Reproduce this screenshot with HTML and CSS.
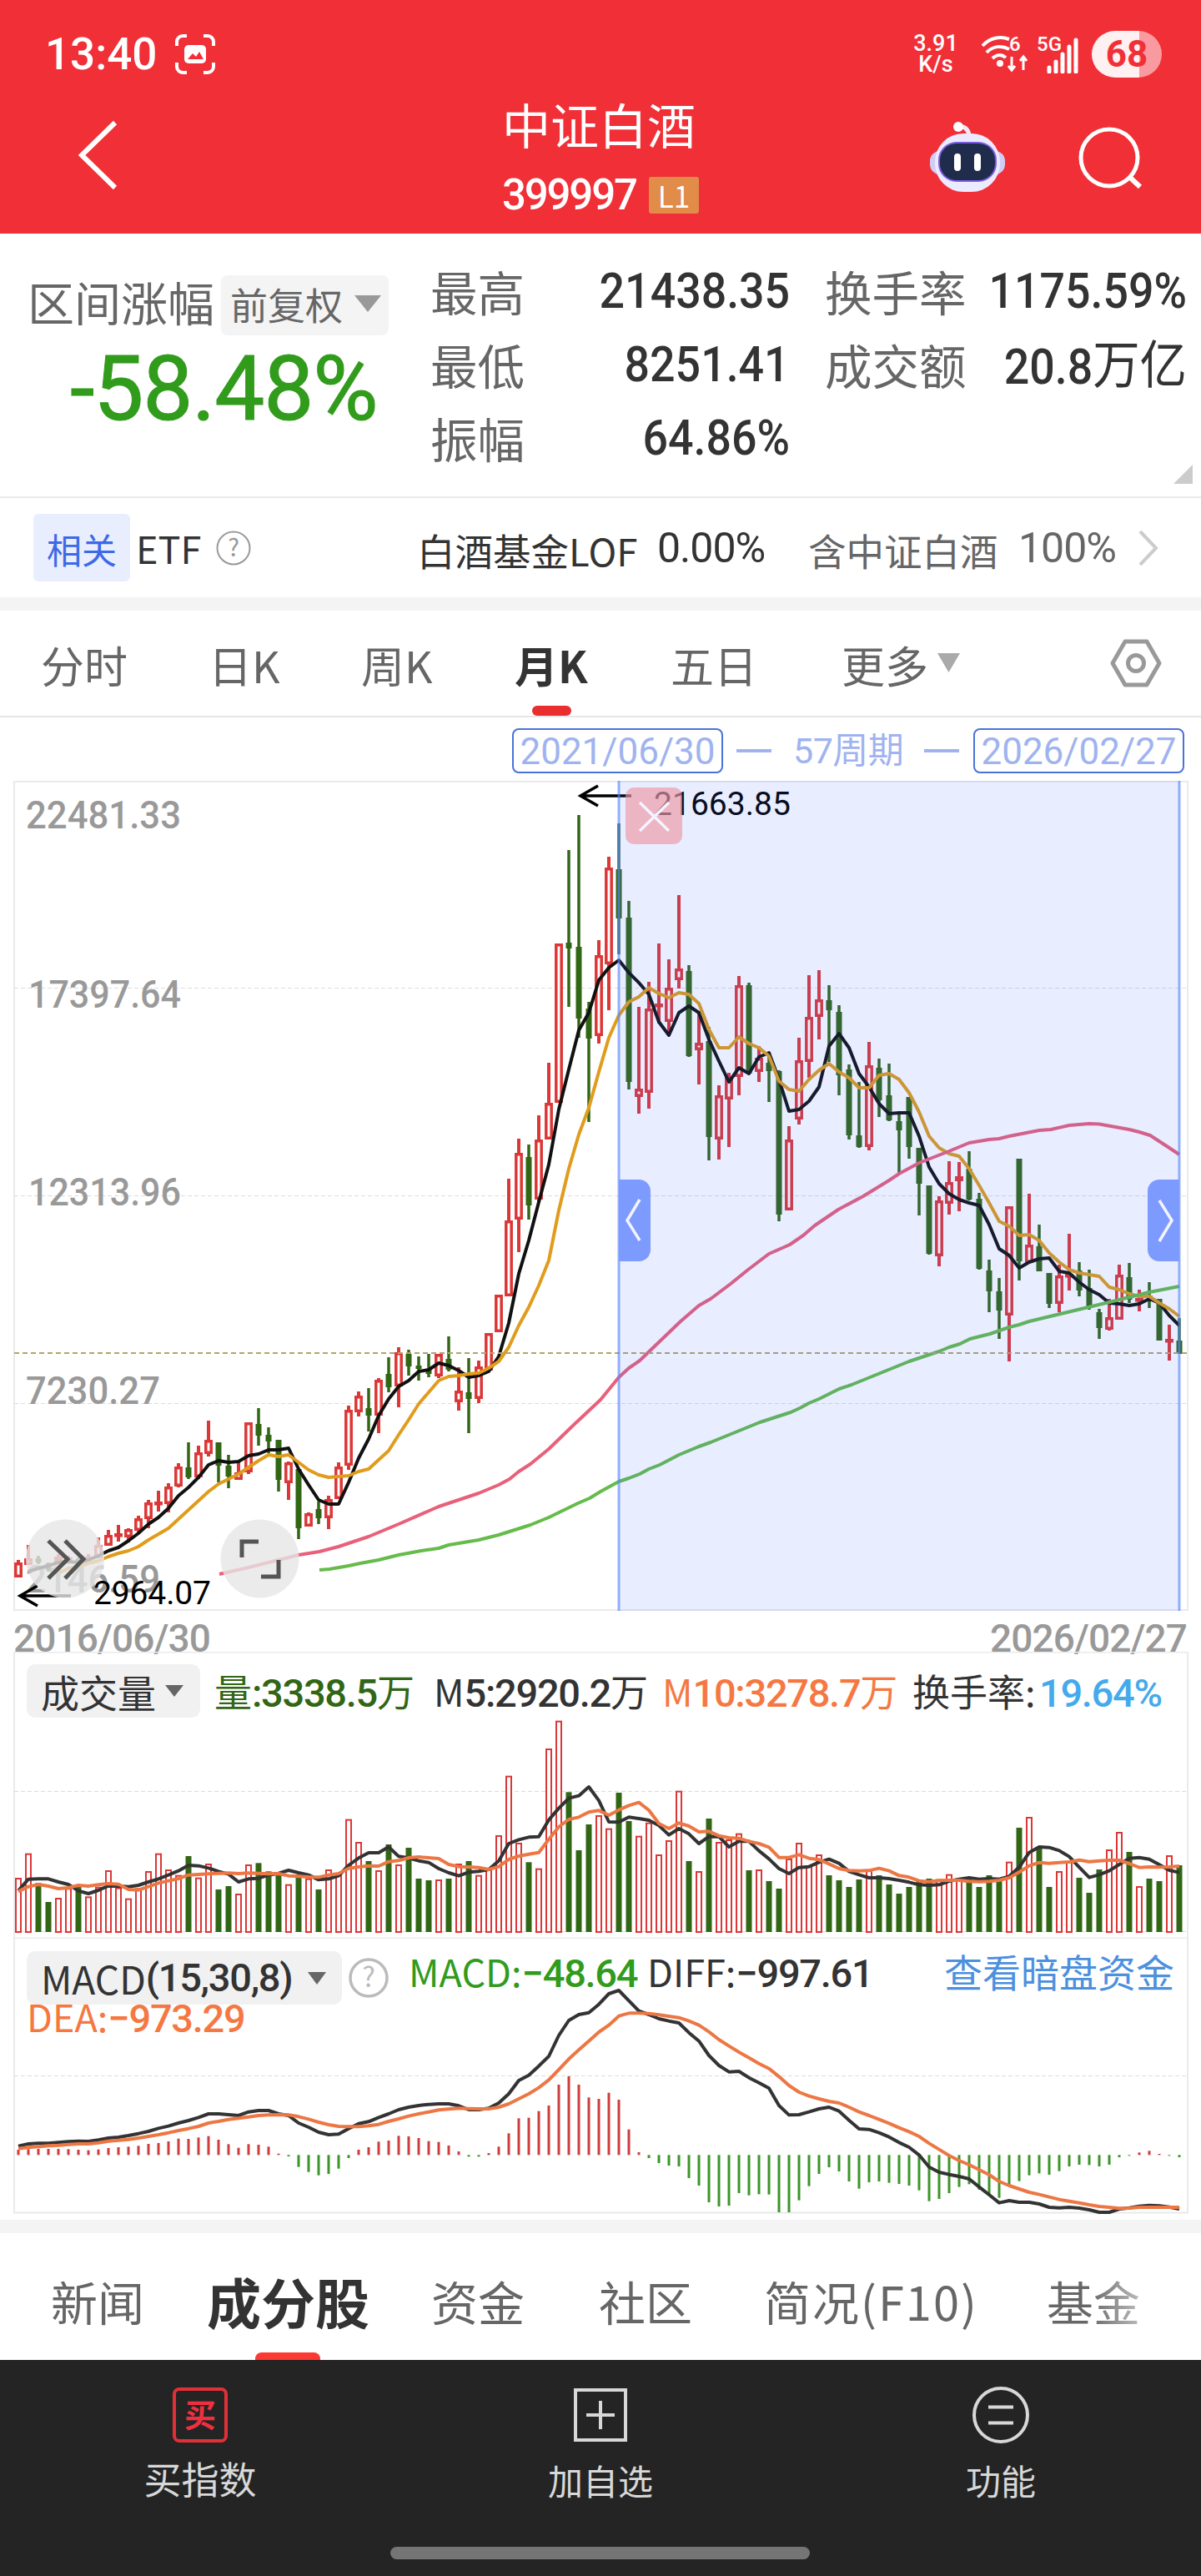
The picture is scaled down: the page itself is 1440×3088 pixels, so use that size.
FILE: index.html
```html
<!DOCTYPE html>
<html lang="zh-CN">
<head>
  <meta charset="UTF-8">
  <title>中证白酒 399997</title>
  <link rel="stylesheet" href="styles.css">
</head>
<body>

  <header class="app-header">
    <div class="status-bar">
      <span class="clock">13:40</span>
      <svg class="shot-icon" width="48" height="48" viewBox="0 0 48 48">
        <path d="M2 14V9a7 7 0 0 1 7-7h5M34 2h5a7 7 0 0 1 7 7v5M46 34v5a7 7 0 0 1-7 7h-5M14 46H9a7 7 0 0 1-7-7v-5" fill="none" stroke="#fff" stroke-width="4"/>
        <rect x="11" y="13" width="26" height="22" rx="5" fill="#fff"/>
        <path d="M15 30l6-7 4 4 4-6 5 9z" fill="#f12f37"/>
      </svg>
      <div class="net-speed"><span>3.91</span><span>K/s</span></div>
      <svg class="wifi-icon" width="58" height="46" viewBox="0 0 58 46">
        <g fill="none" stroke="#fff" stroke-width="4">
          <path d="M1 13C10 3 22 1 33 5"/>
          <path d="M6 21c7-8 18-9 27-4"/>
          <path d="M13 28c5-5 11-5 16-1"/>
        </g>
        <circle cx="22" cy="34" r="4" fill="#fff"/>
        <path d="M36 26v16M32 37l4 5 4-5M50 42V26M46 31l4-5 4 5" fill="none" stroke="#fff" stroke-width="3"/>
        <text x="33" y="19" class="wifi-text">6</text>
      </svg>
      <svg class="signal-icon" width="54" height="46" viewBox="0 0 54 46">
        <text x="0" y="19" class="wifi-text">5G</text>
        <path d="M15 39v5M23 32v12M31 23v21M39 14v30M47 6v38" stroke="#fff" stroke-width="5" stroke-linecap="round"/>
      </svg>
      <span class="battery">68</span>
    </div>
    <div class="title-bar">
      <svg class="back-icon" width="52" height="86" viewBox="0 0 52 86"><path d="M46 4L6 43l40 39" fill="none" stroke="#fff" stroke-width="6"/></svg>
      <div class="title">
        <h1>中证白酒</h1>
        <div class="code-line"><span class="code">399997</span><span class="level">L1</span></div>
      </div>
      <svg class="robot-icon" width="96" height="90" viewBox="0 0 96 90">
        <path d="M36 8q13 0 14 12" fill="none" stroke="#efeafc" stroke-width="5"/>
        <circle cx="37" cy="9" r="6" fill="#fff"/>
        <rect x="3" y="38" width="90" height="28" rx="12" fill="#cfcdf6"/>
        <rect x="9" y="17" width="78" height="70" rx="34" fill="#eceaff"/>
        <rect x="13" y="27" width="70" height="48" rx="22" fill="#7a5be0"/>
        <rect x="15" y="29" width="66" height="44" rx="20" fill="#202c4c"/>
        <path d="M36 45v13M60 45v13" stroke="#fff" stroke-width="8" stroke-linecap="round"/>
      </svg>
      <svg class="search-icon" width="80" height="80" viewBox="0 0 80 80"><circle cx="38" cy="38" r="34" fill="none" stroke="#fff" stroke-width="5"/><path d="M61 60l14 13" stroke="#fff" stroke-width="6"/></svg>
    </div>
  </header>

  <section class="stats">
    <div class="range">
      <div class="range-head">
        <span class="range-label">区间涨幅</span>
        <button class="adjust">前复权<svg width="32" height="20" viewBox="0 0 32 20"><path d="M0 0h32L16 20z" fill="#999"/></svg></button>
      </div>
      <div class="range-value">-58.48%</div>
    </div>
    <dl class="figures">
      <dt>最高</dt><dd>21438.35</dd><dt class="second">换手率</dt><dd>1175.59%</dd>
      <dt>最低</dt><dd>8251.41</dd><dt class="second">成交额</dt><dd>20.8<em>万亿</em></dd>
      <dt>振幅</dt><dd>64.86%</dd>
    </dl>
    <span class="corner"></span>
  </section>

  <section class="etf">
    <span class="etf-tag">相关</span>
    <span class="etf-title">ETF</span>
    <svg class="etf-help" width="42" height="42" viewBox="0 0 42 42"><circle cx="21" cy="21" r="19.5" fill="none" stroke="#999" stroke-width="2"/><text x="21" y="31" class="help-text">?</text></svg>
    <span class="etf-name">白酒基金LOF</span>
    <span class="etf-change">0.00%</span>
    <span class="etf-hold">含中证白酒</span>
    <span class="etf-share">100%</span>
    <svg class="etf-more" width="24" height="42" viewBox="0 0 24 42"><path d="M2 1l19 20L2 41" fill="none" stroke="#ccc" stroke-width="4"/></svg>
  </section>

  <nav class="periods">
    <a>分时</a><a>日K</a><a>周K</a><a class="active">月K</a><a>五日</a>
    <a class="more">更多<svg width="27" height="23" viewBox="0 0 27 23"><path d="M0 0h27L13.500 23z" fill="#aaa"/></svg></a>
    <svg class="settings" width="62" height="58" viewBox="0 0 62 58"><path d="M18 3h26l15 26-15 26H18L3 29z" fill="none" stroke="#999" stroke-width="5" stroke-linejoin="round"/><circle cx="31" cy="29" r="9.500" fill="none" stroke="#999" stroke-width="5"/></svg>
  </nav>

  <div class="interval">
    <span class="date">2021/06/30</span><i></i><span class="count">57周期</span><i></i><span class="date">2026/02/27</span>
  </div>

  <svg id="kline" class="chart" width="1440" height="996" viewBox="0 936 1440 996">
    <g class="axis">
      <rect class="frame" x="17" y="937" width="1407" height="993"/>
      <path class="grid" d="M17 1184.500H1424M17 1433.500H1424M17 1682.500H1424"/>
      <text x="31" y="993" textLength="186" lengthAdjust="spacingAndGlyphs">22481.33</text>
      <text x="34" y="1208" textLength="183" lengthAdjust="spacingAndGlyphs">17397.64</text>
      <text x="34" y="1445" textLength="183" lengthAdjust="spacingAndGlyphs">12313.96</text>
      <text x="31" y="1683" textLength="161" lengthAdjust="spacingAndGlyphs">7230.27</text>
      <text x="31" y="1909" textLength="161" lengthAdjust="spacingAndGlyphs">2146.59</text>
    </g>
    <g id="candles"></g>
    <path class="price" d="M17 1622H1424"/>
    <g class="mark">
      <path d="M757 954H696M717 942l-21 12 21 12"/>
      <text x="784" y="977" textLength="164">21663.85</text>
      <path d="M85 1913H24M45 1901l-21 12 21 12"/>
    </g>
    <g class="selection">
      <rect x="742" y="936" width="672" height="995"/>
      <path class="edge" d="M742 936V1931M1414 936V1931"/>
      <path class="handle" d="M742 1414h24a14 14 0 0 1 14 14v70a14 14 0 0 1-14 14h-24zM1414 1414h-24a14 14 0 0 0-14 14v70a14 14 0 0 0 14 14h24z"/>
      <path class="arrow" d="M767 1438l-15 25 15 24M1390 1439l15 24-15 25"/>
      <rect class="close" x="750" y="944" width="68" height="68" rx="10"/>
      <path class="arrow" d="M767 962l35 34M802 962l-35 34"/>
    </g>
    <g class="float">
      <circle cx="78" cy="1868.500" r="47"/>
      <path d="M58 1847l23 22-23 23M78 1847l22 22-22 23"/>
      <circle cx="311.500" cy="1868.500" r="47"/>
      <path d="M290 1867v-19h20M313 1890h21v-20"/>
    </g>
    <text class="mark-text" x="112" y="1923" textLength="141">2964.07</text>
  </svg>
  <div class="dates"><span>2016/06/30</span><span>2026/02/27</span></div>

  <section class="panel volume">
    <svg id="volume" class="canvas" width="1440" height="344" viewBox="0 1980 1440 344">
      <rect class="frame" x="17" y="1980.500" width="1407" height="343"/>
      <path class="grid" d="M17 2147.500H1424M17 2315.500H1424"/>
    </svg>
    <div class="legend">
      <button>成交量<svg width="22" height="14" viewBox="0 0 22 14"><path d="M0 0h22L11 14z" fill="#666"/></svg></button>
      <span class="vol">量<b>:3338.5</b>万</span>
      <span class="m5">M<b>5:2920.2</b>万</span>
      <span class="m10">M<b>10:3278.7</b>万</span>
      <span class="turn">换手率:</span>
      <span class="rate"><b>19.64%</b></span>
    </div>
  </section>

  <section class="panel macd">
    <svg id="macd" class="canvas" width="1440" height="337" viewBox="0 2324 1440 337">
      <path class="frame" d="M17 2324V2652.500H1424V2324"/>
      <path class="grid" d="M17 2488.500H1424"/>
    </svg>
    <div class="legend">
      <button>MACD<b>(15,30,8)</b><svg width="22" height="15" viewBox="0 0 22 15"><path d="M0 0h22L11 15z" fill="#666"/></svg></button>
      <svg class="help" width="48" height="48" viewBox="0 0 48 48"><circle cx="24" cy="24" r="22" fill="none" stroke="#bbb" stroke-width="3.500"/><text x="24" y="35" class="help-text big">?</text></svg>
      <span class="macd-value">MACD:<b>−48.64</b></span>
      <span class="diff">DIFF:<b>−997.61</b></span>
      <a class="link">查看暗盘资金</a>
    </div>
    <div class="dea">DEA:<b>−973.29</b></div>
  </section>

  <nav class="sections">
    <a>新闻</a><a class="active">成分股</a><a>资金</a><a>社区</a><a class="f10">简况(F10)</a><a class="fade">基金</a>
  </nav>

  <footer class="bottom">
    <div class="actions">
      <a>
        <svg width="70" height="70" viewBox="0 0 70 70"><rect x="4" y="4" width="62" height="62" rx="6" fill="none" stroke="#e03038" stroke-width="4"/><text x="35" y="49" class="buy-text">买</text></svg>
        <span class="wide">买指数</span>
      </a>
      <a>
        <svg width="70" height="70" viewBox="0 0 70 70"><path d="M5 5h60v60H5zM35 18v34M18 35h34" fill="none" stroke="#d8d8d8" stroke-width="4"/></svg>
        <span>加自选</span>
      </a>
      <a>
        <svg width="70" height="70" viewBox="0 0 70 70"><circle cx="35" cy="35" r="32" fill="none" stroke="#d8d8d8" stroke-width="4"/><path d="M20 25.500h30M20 44.500h30" stroke="#d8d8d8" stroke-width="4"/></svg>
        <span>功能</span>
      </a>
    </div>
    <div class="home-bar"></div>
  </footer>

  <script src="chart.js"></script>
</body>
</html>
```
FILE: styles.css
```css
:root {
  --red: #f12f37;
  --text: #333;
  --muted: #666;
  --grey: #999;
  --line: #eaeaea;
  --band: #f4f4f4;
  --num: Roboto, "Noto Sans CJK SC", sans-serif;
  --cjk: "Noto Sans CJK SC", sans-serif;
}
* {
  box-sizing: border-box;
}
body {
  margin: 0;
  width: 1440px;
  background: #fff;
  color: var(--text);
  font-family: var(--cjk);
  line-height: 1;
}
h1, dl, dd {
  margin: 0;
}
button {
  border: none;
  padding: 0;
  font-family: inherit;
  line-height: 1;
  white-space: nowrap;
}
svg {
  display: block;
  flex: none;
}
/* Header */
.app-header {
  height: 280px;
  background: var(--red);
  color: #fff;
}
.status-bar {
  display: flex;
  align-items: center;
  height: 130px;
  padding: 0 47px 0 54px;
  font-family: var(--num);
}
.clock {
  width: 156px;
  font-size: 53px;
  font-weight: 500;
}
.net-speed {
  display: flex;
  flex-direction: column;
  align-items: center;
  width: 66px;
  margin-left: 831px;
  font-size: 27px;
  line-height: 25px;
  font-weight: 500;
}
.wifi-icon {
  margin-left: 22px;
}
.wifi-text {
  font: 500 24px Roboto, sans-serif;
  fill: #fff;
}
.signal-icon {
  margin-left: 8px;
}
.battery {
  width: 84px;
  height: 56px;
  margin-left: auto;
  border-radius: 28px;
  background: linear-gradient(90deg, #fff0f1 68%, #f89a9f 68%);
  color: var(--red);
  font-size: 44px;
  line-height: 57px;
  font-weight: 700;
  text-align: center;
}
.title-bar {
  display: grid;
  grid-template-columns: 510px 520px 96px 80px;
  height: 150px;
  padding-left: 92px;
}
.back-icon {
  margin-top: 13px;
}
.title {
  display: flex;
  flex-direction: column;
}
.title h1 {
  height: 60px;
  font-size: 58px;
  font-weight: 400;
  line-height: 36px;
}
.code-line {
  display: flex;
  align-items: center;
  height: 92px;
  padding-bottom: 5px;
}
.code {
  width: 176px;
  font: 500 51px/52px var(--num);
  letter-spacing: -2.200px;
}
.level {
  width: 60px;
  height: 44px;
  border-radius: 3px;
  background: #e18c49;
  font: 400 35px/43px var(--cjk);
  text-align: center;
}
.robot-icon {
  margin: 13px 0 0 -10px;
}
.search-icon {
  margin: 21px 0 0 74px;
}
/* Range statistics */
.stats {
  position: relative;
  display: flex;
  height: 317px;
  border-bottom: 2px solid var(--line);
}
.range {
  width: 516px;
  padding: 50px 0 0 33px;
}
.range-head {
  display: flex;
  align-items: center;
  gap: 8px;
  height: 72px;
}
.range-label {
  font-size: 56px;
  line-height: 60px;
  margin-top: -10px;
  color: var(--muted);
}
.adjust {
  display: flex;
  align-items: center;
  gap: 14px;
  width: 201px;
  height: 72px;
  padding: 0 0 4px 11px;
  border-radius: 8px;
  background: var(--band);
  color: var(--muted);
  font-size: 45px;
}
.range-value {
  padding-left: 51px;
  margin-top: 11px;
  color: #319b1c;
  font: 400 107px/107px var(--num);
  letter-spacing: -1.200px;
  -webkit-text-stroke: 1px #319b1c;
}
.figures {
  display: grid;
  grid-template-columns: 180px 251px 212px 264px;
  grid-auto-rows: 88px;
  align-items: center;
  height: 264px;
  margin-top: 24px;
}
.figures dt {
  color: var(--muted);
  font-size: 56.500px;
}
.figures dt.second {
  padding-left: 42px;
}
.figures dd {
  justify-self: end;
  font: 500 59px/59px var(--num);
  white-space: nowrap;
  transform: scaleX(.91);
  transform-origin: right;
}
.figures em {
  font: 400 62px/59px var(--cjk);
}
.corner {
  position: absolute;
  right: 10px;
  bottom: 15px;
  border-left: 23px solid transparent;
  border-bottom: 23px solid #ccc;
}
/* Related ETF */
.etf {
  display: flex;
  align-items: center;
  height: 135px;
  padding-left: 40px;
  border-bottom: 16px solid var(--band);
  font-size: 45px;
  line-height: 60px;
  white-space: nowrap;
}
.etf-tag {
  width: 116px;
  height: 81px;
  border-radius: 6px;
  background: #e8eefe;
  color: #3c69e7;
  font-size: 42px;
  line-height: 84px;
  text-align: center;
}
.etf-title {
  width: 96px;
  margin-left: 7px;
}
.etf-name {
  width: 288px;
  margin-left: 199px;
  padding-top: 5px;
  font-size: 45.500px;
}
.etf-change {
  width: 181px;
  font: 400 50px/60px var(--num);
  letter-spacing: -1px;
}
.etf-hold {
  width: 252px;
  padding-top: 5px;
  color: var(--muted);
  font-size: 45.500px;
}
.etf-share {
  width: 144px;
  color: var(--muted);
  font: 400 50px/60px var(--num);
  letter-spacing: -1px;
}
.help-text {
  font: 400 29px "Noto Sans CJK SC", sans-serif;
  fill: #999;
  text-anchor: middle;
}
.help-text.big {
  font-size: 33px;
  fill: #bbb;
}
/* Period tabs */
.periods {
  position: relative;
  display: grid;
  grid-template-columns: 201px 183px 184px 187px 205px 322px 62px;
  align-items: center;
  height: 128px;
  padding-left: 49px;
  border-bottom: 2px solid #e6e6e6;
  color: var(--muted);
  font-size: 52px;
}
.periods a {
  position: relative;
  display: flex;
  align-items: center;
  height: 126px;
  padding-top: 4px;
}
.periods .active {
  color: var(--text);
  font-weight: 700;
}
.periods .active::after {
  content: "";
  position: absolute;
  left: 21px;
  bottom: 0;
  width: 47px;
  height: 12px;
  border-radius: 6px;
  background: #e82e2e;
}
.periods .more svg {
  margin: -6px 0 0 11px;
}
/* Selected interval */
.interval {
  display: flex;
  align-items: center;
  justify-content: flex-end;
  height: 76px;
  padding: 4px 20px 0 0;
  color: #9fb3f0;
  font: 400 44px/48px var(--num);
}
.interval .date {
  width: 253px;
  height: 54px;
  border: 2px solid #4a72d8;
  border-radius: 8px;
  line-height: 52px;
  text-align: center;
}
.interval .count {
  width: 132px;
  font-size: 43px;
  letter-spacing: -.5px;
  white-space: nowrap;
}
.interval i {
  width: 42px;
  height: 4px;
  margin: 0 17px 0 16px;
  background: #9fb3f0;
}
.interval i:nth-of-type(1) {
  margin-right: 26px;
}
.interval i:nth-of-type(2) {
  margin-left: 25px;
}
/* Charts */
.frame {
  fill: none;
  stroke: var(--line);
  stroke-width: 2;
}
.grid {
  fill: none;
  stroke: #dcdcdc;
  stroke-width: 1.200;
  stroke-dasharray: 5 3;
}
.axis text {
  font: 500 47px Roboto, sans-serif;
  fill: var(--grey);
}
.price {
  stroke: #b5a36c;
  stroke-width: 2;
  stroke-dasharray: 6 4;
}
.mark path {
  fill: none;
  stroke: #000;
  stroke-width: 3.500;
}
.mark text, .mark-text {
  font: 400 39px Roboto, sans-serif;
  fill: #000;
}
.up {
  fill: #fff;
  stroke: #dc3737;
}
.down {
  fill: #316615;
  stroke: none;
}
.wick-up {
  stroke: #dc3737;
  stroke-width: 4;
}
.wick-down {
  stroke: #316615;
  stroke-width: 3.500;
}
.line {
  fill: none;
  stroke-width: 4;
  stroke-linejoin: round;
}
.ma5 { stroke: #111; }
.ma10 { stroke: #e09c1c; }
.ma60 { stroke: #e8607a; }
.ma120 { stroke: #66bb4a; }
.dark { stroke: #333; }
.orange { stroke: #ec7744; }
.selection rect {
  fill: rgba(64, 110, 255, .12);
}
.selection .edge {
  stroke: rgba(90, 135, 255, .65);
  stroke-width: 3;
}
.selection .handle {
  fill: #7d9bff;
}
.selection .arrow {
  fill: none;
  stroke: #f4f4ff;
  stroke-width: 3.500;
}
.selection .close {
  fill: rgba(236, 150, 165, .65);
}
.float circle {
  fill: rgba(230, 230, 230, .8);
}
.float path {
  fill: none;
  stroke: #555;
  stroke-width: 5;
}
.dates {
  display: flex;
  justify-content: space-between;
  height: 48px;
  padding: 9px 17px 0 16px;
  color: var(--grey);
  font: 500 46px/46px var(--num);
  letter-spacing: -.9px;
}
/* Indicator panels */
.panel {
  position: relative;
}
.canvas {
  position: absolute;
  left: 0;
  top: 0;
}
.volume {
  height: 344px;
  padding-top: 15px;
}
.macd {
  height: 353px;
  padding-top: 15px;
  border-bottom: 16px solid var(--band);
}
.legend {
  position: relative;
  display: flex;
  align-items: center;
  height: 64px;
  padding-left: 32px;
  font: 400 45px/60px var(--cjk);
  white-space: nowrap;
}
.legend b, .dea b {
  font: 500 47px/48px Roboto, sans-serif;
  letter-spacing: -1.300px;
}
.legend button {
  display: flex;
  align-items: center;
  height: 64px;
  padding-left: 17px;
  border-radius: 10px;
  background: #f1f1f1;
  color: var(--text);
  font-size: 46px;
}
.volume button {
  width: 208px;
  gap: 11px;
}
.macd button {
  width: 378px;
}
.macd button svg {
  margin-left: auto;
  margin-right: 19px;
}
.vol {
  width: 263px;
  margin-left: 17px;
  color: #316615;
}
.m5 {
  width: 274px;
}
.m10 {
  width: 300px;
  color: #f57843;
}
.turn {
  width: 152px;
}
.rate {
  color: #45aaeb;
}
.help {
  margin-left: 8px;
}
.macd-value {
  width: 286px;
  margin: -16px 0 0 24px;
  color: #319b1c;
}
.diff {
  width: 356px;
  margin-top: -16px;
}
.link {
  margin-top: -18px;
  color: #4c90de;
  font-size: 46px;
}
.dea {
  position: relative;
  padding-left: 32px;
  margin-top: -16px;
  color: #f57843;
  font: 400 45px/60px var(--cjk);
}
/* Section tabs */
.sections {
  display: grid;
  grid-template-columns: 187px 269px 201px 198px 339px 130px;
  align-items: center;
  height: 152px;
  padding-left: 61px;
  overflow: hidden;
  color: var(--muted);
  font-size: 56px;
}
.sections a {
  position: relative;
  height: 152px;
  line-height: 162px;
  white-space: nowrap;
}
.sections .active {
  color: var(--text);
  font-size: 65px;
  font-weight: 700;
}
.sections .active::after {
  content: "";
  position: absolute;
  left: 58px;
  bottom: -6px;
  width: 78px;
  height: 15px;
  border-radius: 8px;
  background: #fb3b33;
}
.sections .f10 {
  letter-spacing: 2px;
}
.sections .fade {
  color: transparent;
  background: linear-gradient(90deg, #666 50px, #bbb 112px);
  -webkit-background-clip: text;
  background-clip: text;
}
/* Bottom bar */
.bottom {
  height: 259px;
  padding-top: 31px;
  background: #242424;
}
.actions {
  display: grid;
  grid-template-columns: repeat(3, 1fr);
  height: 193px;
}
.actions a {
  display: flex;
  flex-direction: column;
  align-items: center;
  color: #d8d8d8;
  font-size: 42px;
}
.actions span {
  margin-top: 19px;
  line-height: 48px;
}
.actions .wide {
  margin-top: 17px;
  font-size: 45px;
}
.buy-text {
  font: 700 38px "Noto Sans CJK SC", sans-serif;
  fill: #ee3040;
  text-anchor: middle;
}
.home-bar {
  width: 503px;
  height: 15px;
  margin-left: 468px;
  border-radius: 8px;
  background: #757575;
}
```
FILE: chart.js
```js
// One column every 12px, the first one centred on x = 22
const x = i => 22 + i * 12;

// direction, high, body top, body bottom, low
const candles = [
  ['r',1870,1873,1891,1891],['r',1852,1868,1876,1876],['g',1865,1868,1873,1875],['g',1873,1874,1882,1884],
  ['r',1863,1866,1873,1875],['r',1865,1867,1871,1874],['g',1867,1869,1872,1873],['r',1863,1866,1870,1873],
  ['r',1843,1852,1867,1868],['r',1834,1840,1853,1853],['r',1828,1838,1841,1848],['r',1832,1833,1843,1849],
  ['r',1817,1820,1835,1837],['r',1798,1801,1821,1832],['r',1787,1800,1803,1812],['r',1778,1782,1803,1813],
  ['r',1754,1758,1782,1783],['g',1729,1759,1771,1773],['r',1733,1741,1771,1773],['r',1703,1726,1743,1746],
  ['g',1729,1729,1757,1777],['g',1744,1757,1770,1784],['r',1752,1765,1774,1774],['r',1705,1705,1765,1767],
  ['g',1688,1707,1721,1733],['g',1711,1720,1728,1742],['g',1726,1726,1774,1788],['r',1752,1753,1778,1798],
  ['g',1761,1761,1832,1845],['r',1813,1814,1830,1830],['g',1800,1809,1820,1827],['r',1793,1797,1820,1833],
  ['r',1753,1758,1797,1797],['r',1685,1690,1757,1762],['r',1668,1673,1693,1698],['g',1664,1688,1697,1716],
  ['r',1652,1654,1697,1718],['g',1627,1647,1663,1669],['r',1615,1621,1662,1687],['g',1618,1623,1638,1649],
  ['g',1626,1637,1641,1655],['g',1623,1642,1647,1651],['r',1623,1623,1650,1652],['g',1602,1629,1642,1644],
  ['r',1639,1667,1681,1691],['g',1628,1669,1677,1718],['r',1631,1638,1677,1682],['r',1598,1598,1643,1643],
  ['r',1552,1552,1597,1597],['r',1413,1463,1554,1554],['r',1365,1382,1462,1501],['g',1372,1387,1445,1462],
  ['r',1337,1366,1438,1441],['r',1274,1322,1366,1366],['r',1131,1131,1322,1322],['g',1019,1130,1137,1207],
  ['g',977,1135,1221,1244],['g',1201,1209,1245,1345],['r',1127,1145,1242,1251],['r',1027,1040,1156,1211],
  ['g',987,1042,1101,1144],['g',1080,1100,1297,1306],['r',1207,1305,1315,1335],['r',1177,1209,1310,1329],
  ['r',1131,1203,1207,1227],['r',1150,1184,1225,1240],['r',1073,1161,1175,1185],['g',1157,1164,1266,1267],
  ['r',1212,1250,1259,1300],['g',1231,1248,1363,1391],['r',1301,1313,1366,1390],['r',1286,1291,1318,1375],
  ['r',1170,1181,1291,1313],['g',1178,1181,1287,1287],['r',1254,1268,1285,1297],['g',1261,1274,1284,1321],
  ['g',1283,1284,1456,1464],['r',1350,1366,1451,1451],['r',1244,1271,1342,1348],['r',1169,1219,1273,1292],
  ['r',1163,1198,1219,1246],['g',1181,1199,1211,1273],['g',1205,1213,1289,1313],['g',1276,1282,1361,1366],
  ['g',1297,1361,1375,1376],['r',1249,1277,1375,1379],['g',1269,1280,1319,1339],['g',1275,1313,1343,1344],
  ['g',1334,1344,1355,1407],['g',1315,1315,1375,1389],['g',1376,1376,1419,1457],['g',1421,1421,1503,1504],
  ['r',1434,1439,1506,1518],['r',1392,1417,1443,1456],['r',1393,1410,1416,1452],['g',1380,1401,1438,1439],
  ['g',1430,1437,1521,1522],['g',1510,1523,1548,1573],['g',1532,1548,1571,1605],['r',1446,1446,1577,1632],
  ['g',1389,1389,1512,1535],['r',1431,1492,1514,1514],['g',1468,1494,1524,1524],['g',1526,1526,1563,1568],
  ['r',1516,1529,1563,1573],['r',1479,1527,1531,1547],['g',1513,1523,1547,1554],['g',1522,1544,1568,1570],
  ['g',1569,1573,1592,1605],['r',1557,1579,1594,1595],['r',1516,1528,1582,1582],['g',1514,1531,1558,1562],
  ['r',1546,1556,1559,1572],['g',1537,1553,1555,1568],['g',1557,1557,1607,1607],['r',1588,1605,1607,1631],
  ['g',1580,1607,1623,1623]
];

const ma5 = [1884,1880,1877,1873,1872,1873,1870,1865,1859,1855,1847,1838,1827,1819,1808,1793,1783,1771,1756,1751,1753,1752,1745,1743,1738,1738,1736,1761,1780,1798,1803,1803,1777,1748,1725,1697,1677,1662,1655,1644,1642,1634,1637,1643,1651,1649,1644,1626,1586,1527,1487,1441,1396,1330,1282,1235,1214,1175,1160,1151,1166,1178,1192,1225,1241,1214,1206,1214,1246,1272,1297,1280,1287,1267,1262,1294,1332,1330,1320,1303,1254,1239,1256,1287,1303,1323,1335,1334,1334,1362,1399,1419,1431,1438,1442,1445,1468,1497,1505,1520,1513,1509,1508,1524,1526,1537,1546,1552,1562,1563,1565,1563,1557,1562,1577,1589];
const ma10 = [1886,1880,1878,1874,1871,1866,1862,1859,1854,1846,1839,1832,1821,1810,1799,1788,1779,1773,1767,1759,1751,1744,1746,1744,1753,1762,1768,1771,1770,1769,1764,1761,1750,1739,1720,1702,1683,1669,1655,1650,1649,1647,1646,1640,1632,1615,1589,1567,1541,1511,1451,1401,1360,1328,1285,1244,1217,1201,1195,1184,1191,1196,1190,1192,1203,1234,1256,1256,1243,1251,1256,1266,1296,1306,1308,1294,1283,1275,1285,1292,1304,1304,1289,1287,1294,1310,1333,1362,1376,1383,1386,1401,1421,1442,1464,1470,1481,1480,1487,1502,1513,1522,1526,1528,1530,1543,1546,1551,1554,1554,1562,1569,1578];
const ma60 = '263,1887 298,1879 358,1864 383,1860 406,1854 442,1842 478,1827 526,1806 574,1790 598,1780 611,1773 622,1764 636,1755 658,1737 689,1707 720,1678 742,1651 754,1640 767,1631 791,1608 816,1584 838,1565 852,1557 876,1539 897,1522 922,1503 947,1492 963,1481 977,1469 1005,1450 1035,1434 1066,1415 1078,1407 1102,1394 1138,1380 1162,1370 1186,1366 1198,1365 1210,1362 1246,1355 1260,1354 1282,1349 1306,1347 1318,1347.5 1354,1354 1366,1357 1379,1361 1402,1376 1414,1384';
const ma120 = '383,1882 395,1881 418,1877 432,1874 454,1870 478,1864 505,1859 526,1856 538,1852 574,1846 598,1840 636,1828 658,1819 693,1802 707,1796 720,1788 742,1776 754,1772 767,1767 778,1761 791,1756 814,1744 838,1734 852,1729 911,1705 948,1693 959,1688 970,1682 982,1677 1006,1665 1021,1660 1090,1632 1126,1620 1138,1615 1151,1611 1163,1605 1187,1599 1210,1591 1222,1588 1234,1584 1330,1561 1378,1549 1414,1542';

// Lower panels: offsets from the panel top, three units to a pixel
const volume = [813,725,832,900,885,850,845,880,845,786,848,887,850,789,725,783,803,735,812,762,855,843,870,765,760,790,802,836,802,815,855,783,800,602,684,753,786,693,765,705,816,822,819,816,762,753,803,783,660,446,687,757,779,348,248,505,714,621,588,635,507,609,662,614,729,678,500,753,789,600,684,675,653,786,783,825,852,744,687,770,729,804,822,846,819,785,804,837,870,846,822,816,818,800,820,815,846,804,820,755,633,594,703,846,789,755,813,867,783,711,648,720,843,816,825,732,768];
const vol5 = [860,818,817,817,828,837,860,870,858,842,843,845,840,828,817,803,788,768,770,778,790,800,828,817,815,803,797,786,795,803,820,817,806,768,742,723,723,702,736,742,752,758,780,795,806,793,790,783,752,690,676,667,665,605,563,527,518,486,535,612,613,595,600,606,625,659,636,655,690,665,665,702,682,682,716,745,780,798,776,773,757,746,761,790,802,813,813,816,822,829,838,840,838,825,818,813,818,816,818,808,775,722,702,704,715,737,775,812,802,788,765,743,740,746,766,786,794];
const vol10 = [862,845,837,843,852,849,840,843,838,834,836,855,857,845,832,824,816,803,801,799,797,796,798,796,797,799,798,806,808,810,811,803,798,779,774,770,771,755,751,741,738,741,744,765,773,774,776,783,773,747,735,728,722,675,630,603,595,577,571,588,569,553,542,570,618,636,616,627,648,646,662,669,671,682,690,703,740,740,730,743,748,763,780,787,788,787,779,788,805,811,824,827,823,822,822,826,827,826,822,813,793,770,758,761,758,756,749,755,752,750,750,762,776,774,775,774,771];
const bars = [771,769,768,768,768,769,771,773,770,765,762,760,757,750,747,741,731,732,727,722,735,751,764,751,753,760,785,795,833,851,863,858,839,801,771,762,742,738,721,723,729,740,743,756,777,796,796,783,760,712,658,656,632,612,537,507,537,583,588,566,591,698,780,801,819,828,831,873,900,960,975,972,927,935,931,932,996,996,953,902,858,834,849,885,911,888,885,890,894,900,917,956,948,927,905,895,915,930,944,900,884,863,856,861,848,831,825,826,831,825,798,792,781,775,786,792,798];
const diff = [758,750,748,748,745,742,740,741,736,729,726,720,713,705,694,686,675,666,655,642,642,645,648,635,630,630,642,648,675,690,708,717,715,695,677,670,655,642,627,618,612,608,606,606,613,627,627,622,603,570,522,503,470,435,360,306,285,278,248,210,198,235,272,285,300,308,315,350,380,432,468,491,489,512,530,550,612,646,645,635,624,618,632,665,696,698,710,725,745,762,790,833,852,860,867,876,905,933,962,954,960,960,966,978,980,978,981,987,996,996,984,980,974,971,973,977,984];
const dea = [767,763,760,757,755,752,750,750,746,740,737,734,729,723,717,710,702,695,687,675,669,662,658,653,648,646,645,646,652,661,672,681,687,688,688,685,680,669,660,650,642,635,628,625,622,623,624,624,618,606,588,570,548,520,483,445,412,380,348,323,290,280,280,281,286,291,296,308,323,347,375,398,420,440,461,479,508,540,564,578,588,597,603,618,635,648,662,676,692,706,723,748,770,792,810,825,843,861,885,900,912,924,932,941,950,956,962,969,975,978,982,981,978,978,978,978,978];

function line(points, cls) {
  return `<polyline class="line ${cls}" points="${points}"/>`;
}

function series(values, start, map) {
  return values.map((v, i) => x(i + start) + ',' + map(v)).join(' ');
}

// Candles and moving averages
let html = '';
candles.forEach(([dir, high, top, bottom, low], i) => {
  const cx = x(i);
  const h = bottom - top;
  if (dir === 'g') {
    html += `<path class="wick-down" d="M${cx} ${high}V${low}"/><rect class="down" x="${cx - 3.5}" y="${top}" width="7" height="${Math.max(h, 2)}"/>`;
  } else {
    html += `<path class="wick-up" d="M${cx} ${high}V${top}M${cx} ${bottom}V${low}"/>`;
    html += `<rect class="up" stroke-width="3.5" x="${cx - 3.2}" y="${top + 1.75}" width="6.4" height="${Math.max(h - 3.5, 1)}"/>`;
  }
});
html += line(series(ma5, 1, v => v), 'ma5');
html += line(series(ma10, 4, v => v), 'ma10');
html += line(ma60, 'ma60') + line(ma120, 'ma120');
document.getElementById('candles').innerHTML = html;

// Volume
const volY = v => 1980 + v / 3;
html = '';
volume.forEach((v, i) => {
  const y = volY(v);
  if (candles[i][0] === 'g') {
    html += `<rect class="down" x="${x(i) - 3.5}" y="${y}" width="7" height="${2316 - y}"/>`;
  } else {
    html += `<rect class="up" stroke-width="2" x="${x(i) - 3}" y="${y + 1}" width="6" height="${2315 - y}"/>`;
  }
});
html += line(series(vol5, 0, volY), 'dark') + line(series(vol10, 0, volY), 'orange');
document.getElementById('volume').insertAdjacentHTML('beforeend', html);

// MACD, zero line at 790
const macdY = v => 2320 + v / 3;
html = '';
bars.forEach((v, i) => {
  const top = macdY(Math.min(v, 790));
  const h = Math.max(Math.abs(v - 790) / 3, 1);
  html += `<rect fill="${v < 790 ? '#cc3d3d' : '#3a9628'}" x="${x(i) - 1.5}" y="${top}" width="3" height="${h}"/>`;
});
html += line(series(diff, 0, macdY), 'dark') + line(series(dea, 0, macdY), 'orange');
document.getElementById('macd').insertAdjacentHTML('beforeend', html);
```
